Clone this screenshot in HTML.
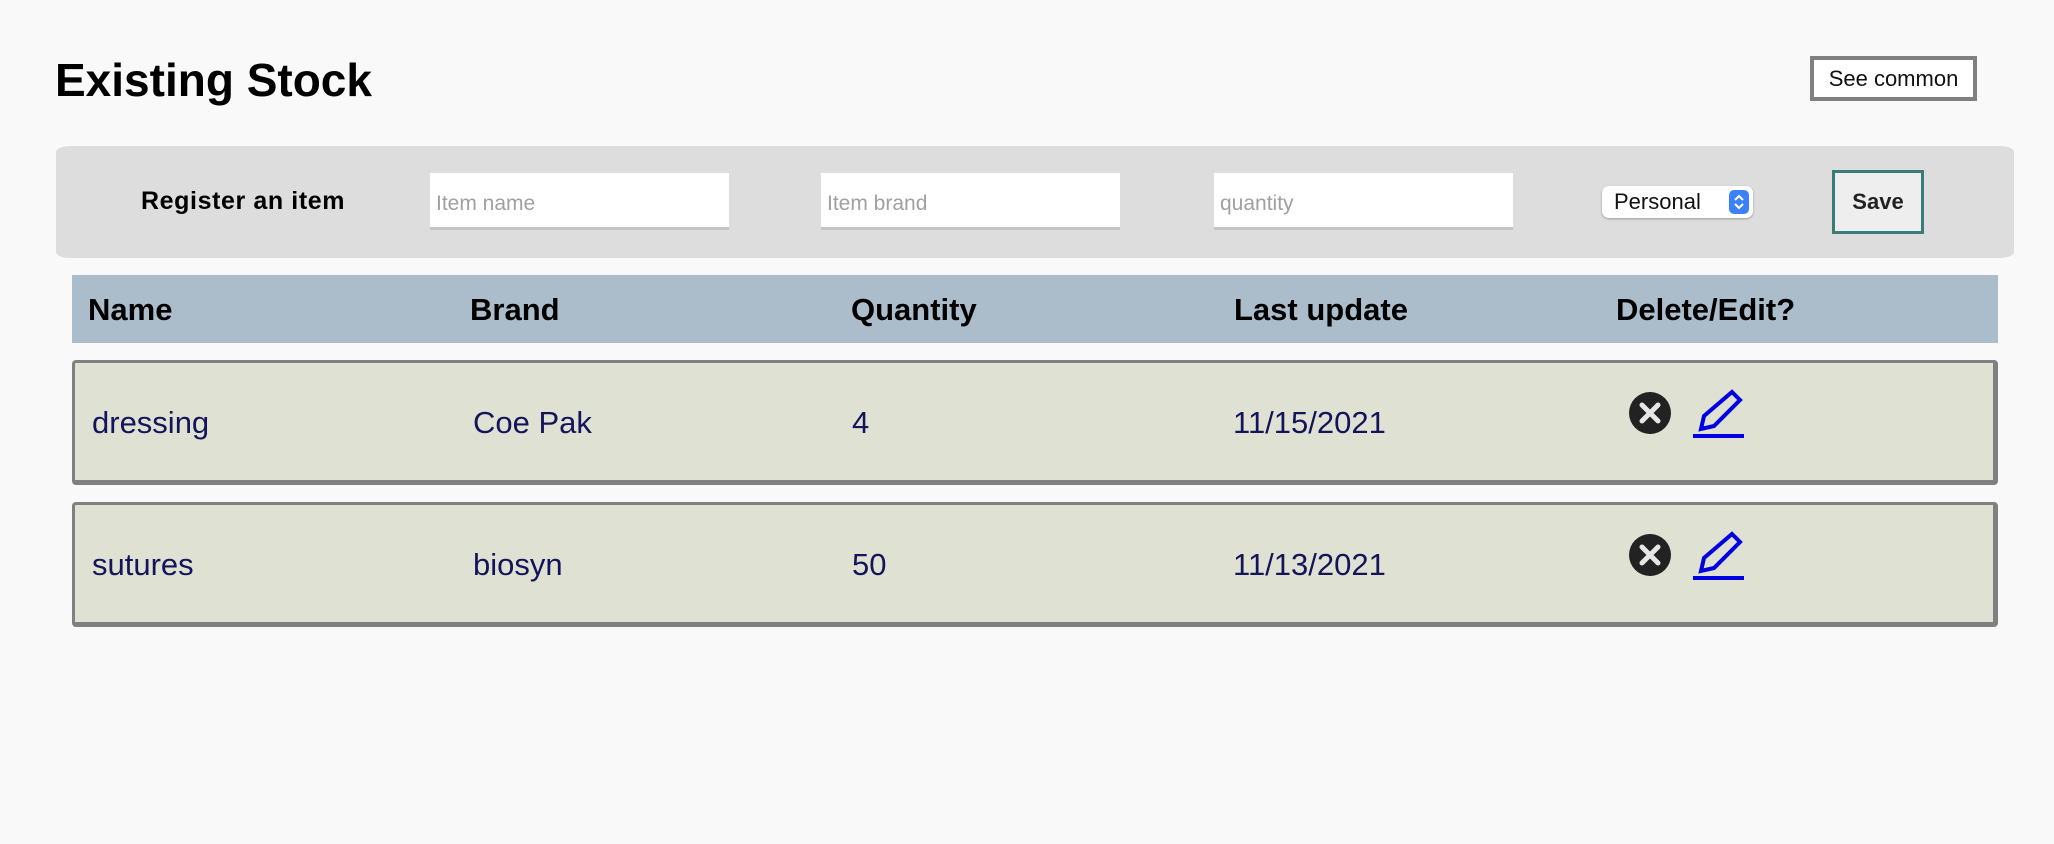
<!DOCTYPE html>
<html><head><style>
body{margin:0;width:2054px;height:844px;background:#f9f9f9;font-family:"Liberation Sans",sans-serif;position:relative;overflow:hidden}
.a{position:absolute}
h1{position:absolute;left:55px;top:53px;margin:0;font-size:46px;font-weight:bold;color:#000}
.see{left:1810px;top:56px;width:159px;height:37px;border:4px solid #808080;background:#fff;font-size:22px;line-height:37px;text-align:center;color:#111}
.panel{left:56px;top:146px;width:1958px;height:112px;background:#dddddd;border-radius:14px/6px}
.inp{top:173px;width:299px;height:57px;background:#fff;border-bottom:3px solid #c4c4c4;box-sizing:border-box;font-size:21px;color:#a0a0a0;line-height:62px;padding-left:6px}
.sel{left:1602px;top:186px;width:151px;height:32px;background:#fff;border-radius:7px;box-shadow:0 1px 2px rgba(0,0,0,.3);font-size:22px;line-height:32px;padding-left:12px;box-sizing:border-box;color:#111}
.sel i{position:absolute;right:4px;top:4px;width:20px;height:24px;background:#3b82f6;border-radius:5px}
.save{left:1832px;top:170px;width:92px;height:64px;box-sizing:border-box;border:3px solid #3a7d78;background:#efeeee;font-size:22px;font-weight:bold;text-align:center;line-height:58px;color:#222}
.hdr{left:72px;top:275px;width:1926px;height:68px;background:#abbcca}
.hdr span{position:absolute;top:17px;font-size:31px;font-weight:bold;color:#000}
.row{left:72px;width:1926px;height:125px;box-sizing:border-box;background:#dfe2d3;border:3px solid #808080;border-bottom-width:5px;border-right-width:5px;border-radius:4px}
.row span{position:absolute;top:42px;font-size:31px;color:#14145a}
</style></head><body>
<h1>Existing Stock</h1>
<div class="a see">See common</div>
<div class="a panel"></div>
<div class="a" style="left:141px;top:187px;font-size:25px;font-weight:bold;letter-spacing:0.6px">Register an item</div>
<div class="a inp" style="left:430px">Item name</div>
<div class="a inp" style="left:821px">Item brand</div>
<div class="a inp" style="left:1214px">quantity</div>
<div class="a sel">Personal<i><svg width="20" height="24" viewBox="0 0 20 24"><path d="M6 10l4-4 4 4M6 14l4 4 4-4" stroke="#fff" stroke-width="2" fill="none"/></svg></i></div>
<div class="a save">Save</div>
<div class="a hdr"><span style="left:16px">Name</span><span style="left:398px">Brand</span><span style="left:779px">Quantity</span><span style="left:1162px">Last update</span><span style="left:1544px">Delete/Edit?</span></div>
<div class="a row" style="top:360px"><span style="left:17px">dressing</span><span style="left:398px">Coe Pak</span><span style="left:777px">4</span><span style="left:1158px">11/15/2021</span></div>
<div class="a row" style="top:502px"><span style="left:17px">sutures</span><span style="left:398px">biosyn</span><span style="left:777px">50</span><span style="left:1158px">11/13/2021</span></div>
<svg class="a" style="left:1620px;top:384px" width="130" height="60" viewBox="0 0 130 60"><circle cx="30" cy="29" r="21" fill="#222"/><path d="M22 21l16 16M38 21L22 37" stroke="#e6e6e6" stroke-width="5" stroke-linecap="round"/><path d="M112 8l8 8-26 26-13 3 3-13z" fill="none" stroke="#0000e0" stroke-width="4"/><path d="M73 52h51" stroke="#0000e0" stroke-width="4"/></svg>
<svg class="a" style="left:1620px;top:526px" width="130" height="60" viewBox="0 0 130 60"><circle cx="30" cy="29" r="21" fill="#222"/><path d="M22 21l16 16M38 21L22 37" stroke="#e6e6e6" stroke-width="5" stroke-linecap="round"/><path d="M112 8l8 8-26 26-13 3 3-13z" fill="none" stroke="#0000e0" stroke-width="4"/><path d="M73 52h51" stroke="#0000e0" stroke-width="4"/></svg>
</body></html>
